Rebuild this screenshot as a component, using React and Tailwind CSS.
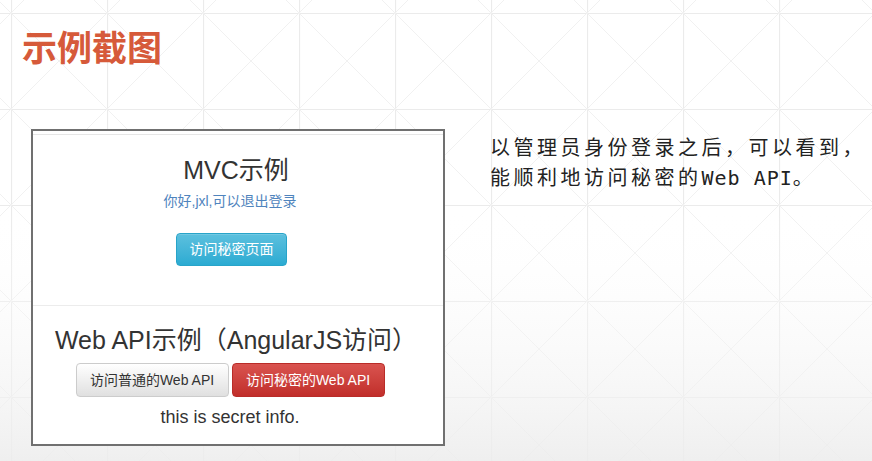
import React from 'react';

const sans = { fontFamily: '"Liberation Sans", Arial, "Noto Sans CJK SC", sans-serif' };

function GridBackground() {
  return (
    <svg className="absolute inset-0 w-full h-full" width="872" height="461">
      <defs>
        <pattern id="cells" x="11" y="13" width="96" height="96" patternUnits="userSpaceOnUse">
          <path d="M0 0.5H96M0.5 0V96" stroke="#ebebeb" strokeWidth="1.2" fill="none" />
          <path d="M0 0L96 96M96 0L0 96" stroke="#f1f1f1" strokeWidth="1" fill="none" />
        </pattern>
        <linearGradient id="shade" x1="0" y1="0" x2="0" y2="1">
          <stop offset="0" stopColor="#ffffff" stopOpacity="0" />
          <stop offset="0.45" stopColor="#ffffff" stopOpacity="0" />
          <stop offset="1" stopColor="#ececec" stopOpacity="0.85" />
        </linearGradient>
      </defs>
      <rect width="872" height="461" fill="#ffffff" />
      <rect width="872" height="461" fill="url(#cells)" />
      <rect width="872" height="461" fill="url(#shade)" />
    </svg>
  );
}

function DemoPanel() {
  return (
    <div
      className="shrink-0 w-[414px] h-[317px] border-2 border-[#707070] bg-white flex flex-col items-center text-[#333]"
      style={sans}
    >
      <div className="w-full h-[4px] border-b border-[#e6e6e6]" />

      <h3 className="mt-[20px] text-[25px] leading-[30px] pr-[4px]">MVC示例</h3>
      <p className="mt-[7px] text-[14px] leading-[18px] text-[#4f84bd] pr-[16px]">你好,jxl,可以退出登录</p>
      <button className="mt-[23px] mr-[13px] w-[111px] h-[33px] rounded-[4px] border border-[#28a4c9] bg-gradient-to-b from-[#5bc0de] to-[#2aabd2] text-white text-[14px] shadow-[inset_0_1px_0_rgba(255,255,255,0.15)]">
        访问秘密页面
      </button>

      <div className="w-full mt-[39px] border-t border-[#ececec]" />

      <h3 className="mt-[19px] text-[25px] leading-[30px] pr-[4px]">Web API示例（AngularJS访问）</h3>
      <div className="mt-[8px] flex gap-[3px] pr-[16px]">
        <button className="w-[153px] h-[34px] rounded-[4px] border border-[#cccccc] bg-gradient-to-b from-[#ffffff] to-[#e0e0e0] text-[#333] text-[14px]">
          访问普通的Web API
        </button>
        <button className="w-[153px] h-[34px] rounded-[4px] border border-[#b92c28] bg-gradient-to-b from-[#d9534f] to-[#c12e2a] text-white text-[14px]">
          访问秘密的Web API
        </button>
      </div>
      <p className="mt-[8px] text-[18px] leading-[24px] pr-[16px]">this is secret info.</p>
    </div>
  );
}

export default function App() {
  const cjk = 'tracking-[3.5px]';
  return (
    <div className="relative w-[872px] h-[461px] overflow-hidden">
      <GridBackground />
      <div className="relative pl-[22px]">
        <h1
          className="pt-[24px] text-[35px] leading-[44px] font-bold text-[#d65a3a]"
          style={{ fontFamily: '"Noto Sans CJK SC", sans-serif' }}
        >
          示例截图
        </h1>

        <div className="mt-[61px] ml-[9px] flex items-start">
          <DemoPanel />
          <div
            className="ml-[45px] mt-[4px] text-[20px] leading-[30px] text-[#222] whitespace-nowrap"
            style={{ fontFamily: '"DejaVu Sans Mono", "Noto Sans CJK SC", monospace' }}
          >
            <div className={cjk}>以管理员身份登录之后，可以看到，</div>
            <div>
              <span className={cjk}>能顺利地访问秘密的</span>
              <span className="tracking-[1px]">Web API</span>
              <span>。</span>
            </div>
          </div>
        </div>
      </div>
    </div>
  );
}
